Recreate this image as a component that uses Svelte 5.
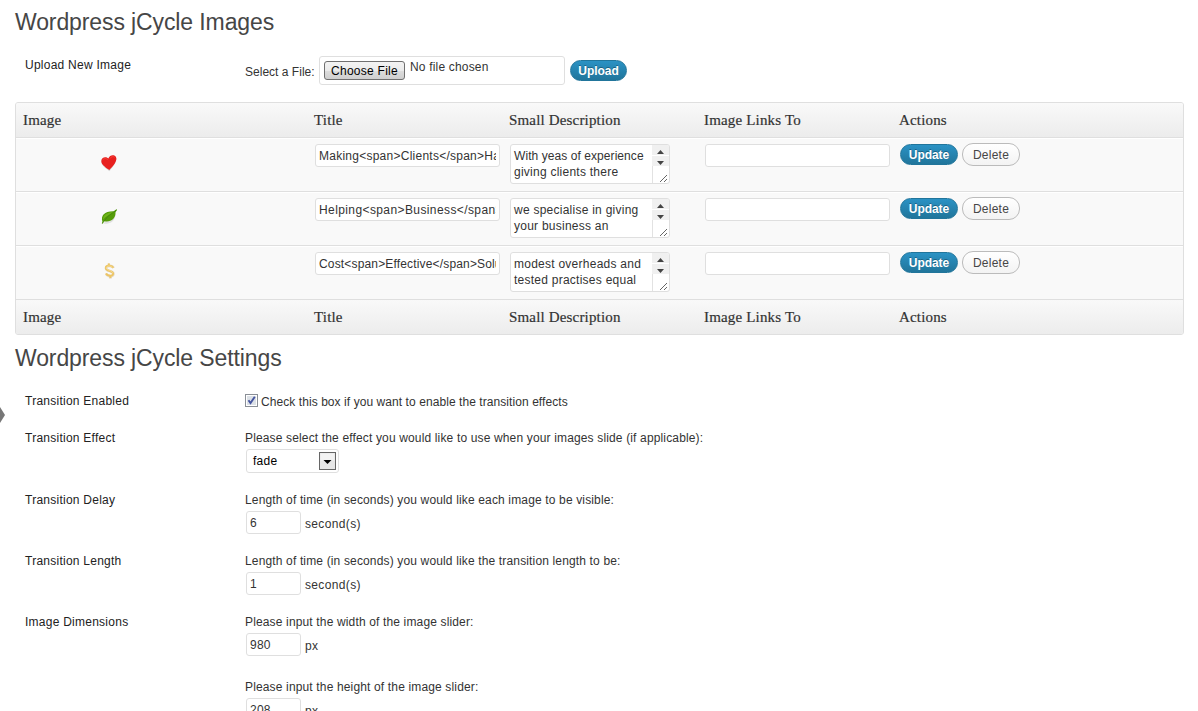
<script>
  const columns = ['Image', 'Title', 'Small Description', 'Image Links To', 'Actions'];
  const slides = [
    { icon: 'heart', title: 'Making<span>Clients</span>Happy', lines: ['With yeas of experience', 'giving clients there'] },
    { icon: 'leaf', title: 'Helping<span>Business</span>Grow', lines: ['we specialise in giving', 'your business an'] },
    { icon: 'dollar', title: 'Cost<span>Effective</span>Solutions', lines: ['modest overheads and', 'tested practises equal'] }
  ];
</script>

{#snippet headings()}
  {#each columns as name}
    <div class="heading"><span>{name}</span></div>
  {/each}
{/snippet}

{#snippet numberField(caption, value, unit)}
  <div class="line">{caption}</div>
  <div class="field">
    <input class="box small" type="text" {value} />
    <span class="unit">{unit}</span>
  </div>
{/snippet}

<div class="page">
  <h2>Wordpress jCycle Images</h2>

  <div class="upload">
    <div class="label">Upload New Image</div>
    <div class="picker">
      <span class="select-label">Select a File:</span>
      <div class="file">
        <button class="choose">Choose File</button>
        <span class="none">No file chosen</span>
      </div>
      <button class="primary">Upload</button>
    </div>
  </div>

  <div class="table">
    <div class="row head">{@render headings()}</div>
    {#each slides as slide}
      <div class="row body {slide.icon}">
        <div class="thumb">
          <svg width="20" height="20" viewBox="0 0 20 20">
            {#if slide.icon === 'heart'}
              <path d="M10.4 18.3C7.5 16 2.6 13 2.4 9.1C2.2 5.3 7 3.3 9.4 6.2C10.7 2.6 14.7 1.8 16.4 4.1C19 7.7 14 14 10.4 18.3Z" fill="#888" opacity=".3" />
              <path d="M10.3 17C7.7 15 2.4 12.1 2.3 8.2C2.2 4.5 6.8 3 9.3 5.6C10.6 2.2 14.6 1.2 16.8 3.8C19.3 7.3 13.8 13.7 10.3 17Z" fill="#e8201f" />
              <path d="M3.8 7.2C4.4 5.2 7.5 5.1 9 7.1M11 5.6C12 3.5 14.3 3.1 15.6 4.3" fill="none" stroke="#fb4a42" stroke-width="1" opacity=".7" />
            {:else if slide.icon === 'leaf'}
              <path d="M4 16.6C9 17.2 15.6 16 16.4 8Z" fill="#888" opacity=".22" />
              <path d="M3.4 14.6C1.6 8.6 5.4 4 14.8 4.2L17.4 2.2L18 3L16.5 5.3C17 11.8 11.4 15.6 5 14.2L3.6 16.8L2.9 16.4Z" fill="#559c09" />
              <path d="M4 12.4C4 7.8 8.7 5 14.8 5C11.5 7.2 7.5 8.8 4 12.4Z" fill="#6fb41a" />
              <path d="M3.3 16.4Q7.5 9 17.6 2.8" fill="none" stroke="#3d7c0c" stroke-width=".6" />
            {:else}
              <path d="M14.6 7C13.4 4.4 7 3.9 7 7.2C7 10.8 14.4 9.4 14.4 12.9C14.4 16 8.6 15.6 7.2 12.9M9.7 2.8L10.2 4.8M11.3 15L11.8 17.4" fill="none" stroke="#bd9c52" stroke-width="2.6" opacity=".35" />
              <path d="M14.1 6.8C13 4.2 6.8 3.9 6.8 7.1C6.8 10.5 14.1 9.1 14.1 12.6C14.1 15.6 8.2 15.2 7 12.4M9.6 2.4L10 4.6M11.1 14.8L11.5 17" fill="none" stroke="#edc565" stroke-width="1.9" />
              <path d="M13.4 6.3C11 4.2 7.3 4.9 7.3 7.1C8 9.8 13.6 9.2 13.5 12.3" fill="none" stroke="#fae4a1" stroke-width=".7" />
            {/if}
          </svg>
        </div>
        <div class="cell"><input class="box title" type="text" value={slide.title} /></div>
        <div class="cell">
          <div class="area">
            <div class="copy">{#each slide.lines as line}<div>{line}</div>{/each}</div>
            <svg class="scroll" width="17" height="38" viewBox="0 0 17 38">
              <path d="M0 0H17V21H0Z" fill="#f0f0f0" />
              <path d="M0 10.5H17" stroke="#fff" />
              <path d="M.5 21V38" stroke="#e2e2e2" />
              <path d="M5 9L8.5 5L12 9Z M5 16H12L8.5 20Z" fill="#444" />
              <path d="M8 37L15 30M12 37L15 34" stroke="#666" fill="none" />
            </svg>
          </div>
        </div>
        <div class="cell"><input class="box link" type="text" value="" /></div>
        <div class="cell actions">
          <button class="primary">Update</button>
          <button class="secondary">Delete</button>
        </div>
      </div>
    {/each}
    <div class="row foot">{@render headings()}</div>
  </div>

  <h2 class="second">Wordpress jCycle Settings</h2>

  <div class="settings">
    <div class="label">Transition Enabled</div>
    <div class="setting enabled">
      <svg width="13" height="13" viewBox="0 0 13 13">
        <rect x=".5" y=".5" width="12" height="12" fill="#fff" stroke="#8a8f96" />
        <rect x="2" y="2" width="9" height="9" fill="#dce1e7" />
        <path d="M3.5 6.2L5.5 9L9.8 2.8" fill="none" stroke="#4555a0" stroke-width="1.9" />
      </svg>
      <span>Check this box if you want to enable the transition effects</span>
    </div>

    <div class="label">Transition Effect</div>
    <div class="setting">
      <div class="line">Please select the effect you would like to use when your images slide (if applicable):</div>
      <div class="select">
        <span>fade</span>
        <svg width="17" height="18" viewBox="0 0 17 18">
          <rect x=".5" y=".5" width="16" height="17" fill="#e6e6e6" stroke="#666" />
          <rect x="1.5" y="1.5" width="14" height="7" fill="#f3f3f3" />
          <path d="M4.5 8H12.5L8.5 12Z" fill="#000" />
        </svg>
      </div>
    </div>

    <div class="label">Transition Delay</div>
    <div class="setting">
      {@render numberField('Length of time (in seconds) you would like each image to be visible:', '6', 'second(s)')}
    </div>

    <div class="label">Transition Length</div>
    <div class="setting">
      {@render numberField('Length of time (in seconds) you would like the transition length to be:', '1', 'second(s)')}
    </div>

    <div class="label">Image Dimensions</div>
    <div class="setting">
      {@render numberField('Please input the width of the image slider:', '980', 'px')}
      <div class="spacer"></div>
      {@render numberField('Please input the height of the image slider:', '208', 'px')}
    </div>
  </div>

  <svg class="arrow" width="5" height="16" viewBox="0 0 5 16"><path d="M0 0L5 8L0 16Z" fill="#777" /></svg>
</div>

<style>
  :global(body) { background: #fff; }
  .page {
    position: relative;
    box-sizing: border-box;
    width: 1198px;
    height: 711px;
    overflow: hidden;
    padding: 7px 14px 0 15px;
    font: 12px/16px "Liberation Sans", Arial, sans-serif;
    letter-spacing: .25px;
    color: #333;
  }
  h2 { margin: 0; height: 30px; font-size: 23px; font-weight: 400; line-height: 30px; letter-spacing: -.11px; color: #464646; }
  h2.second { margin-top: 8px; }
  input, button { box-sizing: border-box; margin: 0; font: inherit; letter-spacing: inherit; color: inherit; outline: none; }
  .label { padding-left: 10px; color: #222; }

  .upload { display: grid; grid-template-columns: 230px 1fr; height: 65px; }
  .upload .label { padding-top: 20px; }
  .picker { display: flex; align-items: flex-start; padding-top: 19px; }
  .select-label { width: 74px; padding-top: 8px; letter-spacing: .02px; white-space: nowrap; }
  .file { box-sizing: border-box; display: flex; width: 246px; height: 29px; padding: 4px; border: 1px solid #dfdfdf; border-radius: 3px; }
  .choose {
    width: 81px; height: 19px; padding: 0; line-height: 16px; color: #000; white-space: nowrap;
    border: 1px solid #707070; border-radius: 3px;
    background: linear-gradient(#f3f3f3 0%, #ebebeb 50%, #ddd 51%, #cfcfcf 100%);
  }
  .none { margin: -2px 0 0 5px; letter-spacing: .18px; }
  .picker .primary { margin: 4px 0 0 5px; width: 57px; }

  .primary {
    width: 58px; height: 21px; padding: 0; border: 1px solid #21759b; border-radius: 11px;
    background: linear-gradient(#2a92c4, #21759b); color: #fff; font-weight: 700; line-height: 18px; letter-spacing: -.05px;
    text-shadow: 0 -1px 0 rgba(0, 0, 0, .3);
  }
  .secondary {
    width: 58px; height: 23px; padding: 0; border: 1px solid #bbb; border-radius: 11px;
    background: linear-gradient(#fff, #f3f3f3); color: #464646; line-height: 20px;
  }

  .table { box-sizing: border-box; width: 1169px; height: 233px; border: 1px solid #dfdfdf; border-radius: 3px; background: #f9f9f9; overflow: hidden; }
  .row { display: grid; grid-template-columns: 291px 195px 195px 195px 1fr; box-sizing: border-box; }
  .head, .foot { height: 35px; background: linear-gradient(#f9f9f9, #ececec); }
  .head { border-bottom: 1px solid #dfdfdf; }
  .body { height: 54px; border-bottom: 1px solid #dfdfdf; border-top: 1px solid #fff; }
  .heading { padding: 8px 0 0 7px; font: 15px/18px "Liberation Serif", Georgia, serif; letter-spacing: .17px; color: #333; -webkit-text-stroke: .2px #333; }
  .thumb { padding: 14px 0 0 83px; }
  .cell { padding: 5px 0 0 8px; }
  .box { display: block; height: 23px; padding: 0 3px; border: 1px solid #dfdfdf; border-radius: 3px; background: #fff; }
  .title { width: 185px; }
  .leaf .title { letter-spacing: .4px; }
  .dollar .title { letter-spacing: .16px; }
  .link { width: 185px; }
  .small { width: 55px; }
  .area { box-sizing: border-box; display: flex; justify-content: space-between; width: 160px; height: 40px; border: 1px solid #dfdfdf; border-radius: 3px; background: #fff; overflow: hidden; }
  .copy { padding: 3px 0 0 3px; white-space: nowrap; }
  .heart .copy div:first-child { letter-spacing: .07px; }
  .scroll { flex: none; }
  .actions { display: flex; gap: 4px; }
  .actions .secondary { margin-top: -1px; }

  .settings { display: grid; grid-template-columns: 230px 1fr; grid-template-rows: 37px 62px 61px 61px auto; margin-top: 20px; }
  .enabled { display: flex; gap: 3px; padding-top: 1px; letter-spacing: .07px; }
  .line { height: 16px; letter-spacing: .15px; white-space: nowrap; }
  .field { display: flex; height: 23px; margin: 3px 0 0 1px; }
  .unit { padding: 5px 0 0 4px; letter-spacing: .35px; }
  .spacer { height: 23px; }
  .select { box-sizing: border-box; display: flex; justify-content: space-between; width: 93px; height: 24px; margin: 3px 0 0 1px; padding: 2px 2px 0 6px; border: 1px solid #dfdfdf; border-radius: 3px; color: #000; }
  .select span { padding-top: 1px; }
  .arrow { position: absolute; left: 0; top: 407px; }
</style>
